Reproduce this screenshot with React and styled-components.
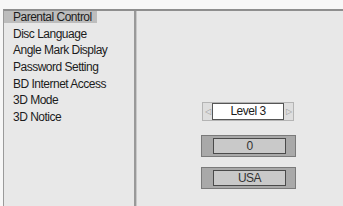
import React from "react";
import styled, { createGlobalStyle } from "styled-components";

const GlobalStyle = createGlobalStyle`
  html, body {
    margin: 0;
    padding: 0;
    background: #f7f7f7;
  }
  body {
    font-family: "Liberation Sans", Arial, sans-serif;
  }
`;

const menuItems = [
  "Parental Control",
  "Disc Language",
  "Angle Mark Display",
  "Password Setting",
  "BD Internet Access",
  "3D Mode",
  "3D Notice",
];

const App = () => {
  return (
    <Screen>
      <GlobalStyle />
      <Frame>
        <Menu>
          {menuItems.map((item, i) => (
            <MenuItem key={item} selected={i === 0}>
              {item}
            </MenuItem>
          ))}
        </Menu>
        <Divider />
        <Settings>
          <Selector>
            <Arrow>◁</Arrow>
            <SelectorField>Level 3</SelectorField>
            <Arrow>▷</Arrow>
          </Selector>
          <ValueBox $gap="14px">
            <ValueField>0</ValueField>
          </ValueBox>
          <ValueBox $gap="10px">
            <ValueField>USA</ValueField>
          </ValueBox>
        </Settings>
      </Frame>
    </Screen>
  );
};

const Screen = styled.div`
  width: 343px;
  height: 206px;
  padding: 9px 0 0 3px;
  box-sizing: border-box;
  overflow: hidden;
`;

const Frame = styled.div`
  display: grid;
  grid-template-columns: 130px 2px 1fr;
  height: 197px;
  background: #e8e8e8;
  border-top: 2px solid #8e8e8e;
  border-left: 1px solid #9a9a9a;
`;

const Menu = styled.ul`
  list-style: none;
  margin: 0;
  padding: 0;
  display: flex;
  flex-direction: column;
  gap: 4.7px;
`;

const MenuItem = styled.li`
  width: 93px;
  height: 12px;
  line-height: 12px;
  padding-left: 9px;
  box-sizing: border-box;
  font-size: 12px;
  letter-spacing: -0.5px;
  white-space: nowrap;
  color: #1c1c1c;
  background: ${(p) => (p.selected ? "#bdbdbd" : "transparent")};
`;

const Divider = styled.div`
  background: #999;
  box-shadow: 1px 0 0 #c8c8c8;
`;

const Settings = styled.div`
  display: flex;
  flex-direction: column;
  align-items: flex-start;
  padding: 91px 0 0 65px;
`;

const Selector = styled.div`
  display: flex;
  align-items: center;
  width: 92px;
  height: 19px;
  margin-left: 1px;
  box-sizing: border-box;
  border: 1px solid #b4b4b4;
  background: #dedede;
`;

const Arrow = styled.span`
  width: 9px;
  text-align: center;
  font-size: 8px;
  color: #9a9a9a;
  line-height: 17px;
`;

const SelectorField = styled.div`
  flex: 1;
  height: 15px;
  line-height: 15px;
  border: 1px solid #555;
  background: #fff;
  text-align: center;
  font-size: 12px;
  letter-spacing: -0.5px;
  color: #1c1c1c;
`;

const ValueBox = styled.div`
  display: flex;
  align-items: center;
  justify-content: center;
  width: 95px;
  height: 22px;
  margin-top: ${(p) => p.$gap};
  box-sizing: border-box;
  border: 1px solid #7a7a7a;
  background: #a9a9a9;
`;

const ValueField = styled.div`
  width: 73px;
  height: 16px;
  line-height: 15px;
  margin-left: 2px;
  box-sizing: border-box;
  border: 1px solid #4a4a4a;
  background: #c9c9c9;
  text-align: center;
  font-size: 12px;
  letter-spacing: -0.5px;
  color: #333;
`;

export default App;
